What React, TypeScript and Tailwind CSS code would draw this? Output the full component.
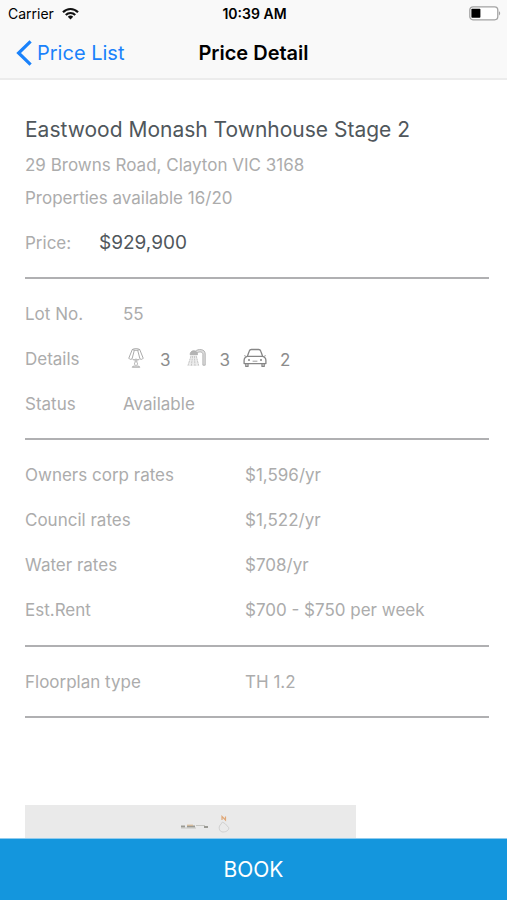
import React from 'react';

interface DetailRowProps {
    label: string;
    wide?: boolean;
    children: React.ReactNode;
}

const rates = [
    { label: 'Owners corp rates', value: '$1,596/yr' },
    { label: 'Council rates', value: '$1,522/yr' },
    { label: 'Water rates', value: '$708/yr' },
    { label: 'Est.Rent', value: '$700 - $750 per week' },
];

const DetailRow: React.FC<DetailRowProps> = ({ label, wide, children }) => (
    <div className="flex h-[45px] items-center">
        <dt className={wide ? 'w-[220px] shrink-0' : 'w-[98px] shrink-0'}>{label}</dt>
        <dd>{children}</dd>
    </div>
);

const Divider = () => <hr className="border-t-2 border-[#b0b0b2]" />;

const WifiIcon = () => (
    <svg className="h-[13px] w-[17px]" viewBox="0 0 17 13" fill="none" stroke="#111" strokeWidth="2.2" aria-hidden="true">
        <path d="M1 5.2C5.2 0.9 11.8 0.9 16 5.2" />
        <path d="M3.8 8C6.4 5.3 10.6 5.3 13.2 8" />
        <path d="M8.5 12.4L5.8 9.7C7.3 8.2 9.7 8.2 11.2 9.7Z" fill="#111" stroke="none" />
    </svg>
);

const BatteryIcon = () => (
    <svg className="h-[15px] w-8" viewBox="0 0 32 15" fill="none" aria-hidden="true">
        <rect x="0.8" y="0.8" width="28" height="13" rx="3.2" stroke="#a3a3a3" strokeWidth="1.3" fill="#fff" />
        <rect x="2.4" y="2.8" width="9" height="9" rx="0.8" fill="#000" />
        <path d="M30 5.2C31.6 5.8 31.6 8.8 30 9.4Z" fill="#a3a3a3" />
    </svg>
);

const LampIcon = () => (
    <svg className="h-5 w-4" viewBox="0 0 16 20" fill="none" stroke="#a0a0a0" strokeWidth="0.9" aria-hidden="true">
        <path d="M4.3 1.5C6 0.4 10 0.4 11.7 1.5L15.2 10.2C14.4 11.6 12.8 11.7 11.9 10.7C11 12.2 9.2 12.2 8 10.9C6.8 12.2 5 12.2 4.1 10.7C3.2 11.7 1.6 11.6 0.8 10.2Z" />
        <path d="M4.3 1.5C6 2.6 10 2.6 11.7 1.5M6.3 2.3L4.1 10.7M9.7 2.3L11.9 10.7" />
        <path d="M7.2 12V14.2C6.2 15 6.3 16.3 7.3 17.2M8.8 12V14.2C9.8 15 9.7 16.3 8.7 17.2M4.2 19.2C4.6 17.5 11.4 17.5 11.8 19.2Z" />
    </svg>
);

const ShowerIcon = () => (
    <svg className="h-5 w-5" viewBox="0 0 20 20" fill="none" stroke="#adadad" aria-hidden="true">
        <path d="M8.3 3.2C11 0.7 18.2 0.6 18.2 6V17.2H15.9V6.2C15.7 3.4 11.9 3.4 9.6 5.2" fill="#dedede" strokeWidth="0.9" />
        <path d="M3.2 6.8C3 3.7 5.6 2 8.2 3.1C10 3.8 10.7 5.4 10.4 6.8Z" fill="#b4b4b4" strokeWidth="0.9" />
        <path d="M4 7.5H9.8L12 18H0.6Z" fill="#ececec" stroke="none" />
        <path d="M4 8L0.8 18M5.6 8L4.3 18M7.4 8L8 18M9.2 8L11.8 18" stroke="#c2c2c2" strokeWidth="0.9" strokeDasharray="2 0.6" />
    </svg>
);

const CarIcon = () => (
    <svg className="h-5 w-6" viewBox="0 0 24 20" fill="none" stroke="#868686" strokeWidth="1.3" strokeLinejoin="round" aria-hidden="true">
        <path d="M4.4 8.2L6.2 3.2C6.6 2 7.2 1.5 8.4 1.5H15.6C16.8 1.5 17.4 2 17.8 3.2L19.6 8.2" />
        <path d="M4.4 8.4H19.6C22 9 22.9 10.6 22.9 12.6V15.6H1.1V12.6C1.1 10.6 2 9 4.4 8.4Z" />
        <path d="M1.2 7.6L3.6 8.6M22.8 7.6L20.4 8.6M9.6 13.2H14.4" strokeWidth="0.8" />
        <path d="M2.8 15.8V18.4H5V15.8M19 15.8V18.4H21.2V15.8" />
        <circle cx="6" cy="12" r="1" fill="#868686" stroke="none" />
        <circle cx="18" cy="12" r="1" fill="#868686" stroke="none" />
    </svg>
);

// Scale bar and north arrow at the top of the plan sheet
const FloorplanPreview = () => (
    <svg className="mx-auto h-8 w-20" viewBox="-20 0 80 32" fill="none" aria-label="Floorplan">
        <path d="M10 21.5H14M16 21.5H24M33 22H37" stroke="#9a9a94" strokeWidth="2" />
        <path d="M10 23H25M25 20.5H34" stroke="#bcbcb8" strokeWidth="0.8" />
        <path d="M16 20.2H22" stroke="#d8b48a" strokeWidth="1" />
        <path d="M51 15V11.5L54.5 15V11.5" stroke="#e0a878" strokeWidth="1.2" />
        <path d="M51.5 17L48.5 21C47.5 24 49 27 52 27C56 27 58.3 24.5 57.6 22.5L54.5 19Z" stroke="#c9c9c9" strokeWidth="0.8" />
    </svg>
);

export default function App() {
    return (
        <div className="flex h-screen flex-col bg-white font-['Inter',sans-serif] text-[17px] text-[#acacac]">
            {/* Header */}
            <header className="border-b-2 border-[#ececec] bg-[#f9f9f9] text-black">
                <div className="grid h-[27px] grid-cols-3 items-center pl-2 pr-1.5 text-sm">
                    <div className="flex items-center gap-2">
                        <span>Carrier</span>
                        <WifiIcon />
                    </div>
                    <span className="text-center font-semibold">10:39 AM</span>
                    <div className="flex justify-end">
                        <BatteryIcon />
                    </div>
                </div>
                <nav className="grid h-[51px] grid-cols-[1fr_auto_1fr] items-center px-4 text-xl">
                    <a href="#" className="flex items-center gap-[5px] text-[#1a82fb]">
                        <svg className="h-[26px] w-4" viewBox="0 0 16 26" fill="none" stroke="currentColor" strokeWidth="3.2" aria-hidden="true">
                            <path d="M14.6 1.3L2.6 13L14.6 24.7" />
                        </svg>
                        Price List
                    </a>
                    <h1 className="font-semibold">Price Detail</h1>
                </nav>
            </header>

            {/* Property details */}
            <main className="min-h-0 flex-1 overflow-y-auto pl-[25px] pr-[18px] pt-8 [scrollbar-width:none]">
                <h2 className="mb-px text-[21px] leading-9 text-[#50575c]">Eastwood Monash Townhouse Stage 2</h2>
                <p className="leading-[33px]">29 Browns Road, Clayton VIC 3168</p>
                <p className="leading-[33px]">Properties available 16/20</p>
                <div className="mb-[11px] mt-1.5 flex h-[45px] items-center">
                    <span className="w-[74px]">Price:</span>
                    <span className="text-[19px] text-[#50575c]">$929,900</span>
                </div>

                <Divider />
                <dl className="pb-[11px] pt-[13px]">
                    <DetailRow label="Lot No.">55</DetailRow>
                    <DetailRow label="Details">
                        <div className="flex items-start pl-[5px] leading-6 text-[#8c8c8c]">
                            <LampIcon />
                            <span className="mx-4">3</span>
                            <ShowerIcon />
                            <span className="mx-[13px]">3</span>
                            <CarIcon />
                            <span className="ml-[13px]">2</span>
                        </div>
                    </DetailRow>
                    <DetailRow label="Status">Available</DetailRow>
                </dl>
                <Divider />
                <dl className="pb-3 pt-[13px]">
                    {rates.map((rate) => (
                        <DetailRow key={rate.label} label={rate.label} wide>
                            {rate.value}
                        </DetailRow>
                    ))}
                </dl>
                <Divider />
                <dl className="pb-[11px] pt-[13px]">
                    <DetailRow label="Floorplan type" wide>TH 1.2</DetailRow>
                </dl>
                <Divider />

                <div className="mt-[87px] h-60 w-[331px] bg-[#eaeaea]">
                    <FloorplanPreview />
                </div>
            </main>

            {/* Footer action */}
            <button className="h-[62px] shrink-0 border-t border-[#8fcbee] bg-[#1496dd] text-[21px] text-white">
                BOOK
            </button>
        </div>
    );
}
